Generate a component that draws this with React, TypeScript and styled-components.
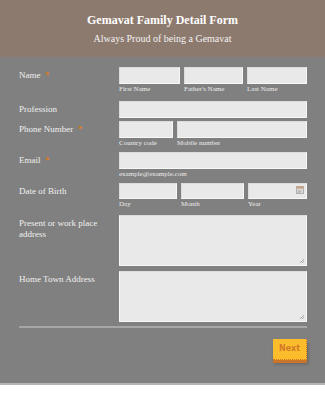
import React from 'react';
import styled, { createGlobalStyle } from 'styled-components';

const GlobalStyle = createGlobalStyle`
  html, body {
    margin: 0;
    padding: 0;
    background: #ffffff;
  }
  * {
    box-sizing: border-box;
  }
`;

const Page = styled.div`
  width: 325px;
  background: #808080;
  border-bottom: 2px solid #b4b4b4;
  font-family: 'Liberation Serif', 'Times New Roman', serif;
`;

const Header = styled.header`
  height: 57px;
  background: #8d7a6e;
  display: flex;
  flex-direction: column;
  align-items: center;
  padding-top: 13px;
`;

const Title = styled.h1`
  margin: 0;
  font-size: 12px;
  font-weight: 700;
  color: #ffffff;
  line-height: 15px;
`;

const Subtitle = styled.div`
  margin-top: 4px;
  font-size: 10px;
  color: #f2f2f2;
  line-height: 13px;
`;

const Form = styled.form`
  padding: 10px 18px 23px 19px;
  display: flex;
  flex-direction: column;
`;

const Row = styled.div<{ $after?: number }>`
  display: grid;
  grid-template-columns: 100px 1fr;
  margin-bottom: ${(p) => p.$after ?? 3}px;
`;

const Label = styled.label`
  font-size: 9px;
  line-height: 11px;
  color: #f0f0f0;
  padding-top: 3px;
  padding-right: 8px;
`;

const Req = styled.span`
  color: #e57a12;
  margin-left: 5px;
  font-size: 8px;
  font-weight: 700;
`;

const Fields = styled.div<{ $cols: string; $gap?: number }>`
  display: grid;
  grid-template-columns: ${(p) => p.$cols};
  column-gap: ${(p) => p.$gap ?? 4}px;
`;

const Field = styled.div`
  display: flex;
  flex-direction: column;
  position: relative;
`;

const Input = styled.div<{ $h?: number }>`
  height: ${(p) => p.$h ?? 17}px;
  background: #e9e9e9;
  border: 1px solid #f7f7f7;
  border-top-color: #dcdcdc;
  border-left-color: #dcdcdc;
`;

const Sub = styled.span`
  font-size: 7px;
  line-height: 11px;
  height: 11px;
  color: #ececec;
`;

const TextArea = styled.div<{ $h: number }>`
  height: ${(p) => p.$h}px;
  background: #e9e9e9;
  border: 1px solid #f7f7f7;
  border-top-color: #dcdcdc;
  position: relative;
`;

const Grip = styled.svg`
  position: absolute;
  right: 1px;
  bottom: 1px;
`;

const CalIcon = styled.svg`
  position: absolute;
  right: 3px;
  top: 3px;
`;

const Divider = styled.hr`
  margin: 4px 0 0 0;
  border: none;
  border-top: 2px solid #a6a6a6;
`;

const Actions = styled.div`
  display: flex;
  justify-content: flex-end;
  padding-top: 11px;
`;

const NextButton = styled.button`
  width: 34px;
  height: 21px;
  padding: 0 0 2px 0;
  background: #fcbd2d;
  color: #d27a26;
  font-family: 'DejaVu Sans', Verdana, sans-serif;
  font-size: 8px;
  font-weight: 700;
  border: none;
  border-right: 1px dotted #cc7424;
  border-bottom: 1px dotted #cc7424;
  box-shadow: 0 3px 0 #c8752a, 1px 4px 3px rgba(0, 0, 0, 0.25);
  cursor: pointer;
`;

const ResizeGrip = () => (
  <Grip width="6" height="6" viewBox="0 0 6 6">
    <path d="M5 1 L1 5 M5 3 L3 5" stroke="#9a9a9a" strokeWidth="0.8" />
  </Grip>
);

export default function App() {
  return (
    <>
      <GlobalStyle />
      <Page>
        <Header>
          <Title>Gemavat Family Detail Form</Title>
          <Subtitle>Always Proud of being a Gemavat</Subtitle>
        </Header>
        <Form>
          <Row $after={6}>
            <Label>
              Name<Req>*</Req>
            </Label>
            <Fields $cols="61px 59px 1fr">
              <Field>
                <Input />
                <Sub>First Name</Sub>
              </Field>
              <Field>
                <Input />
                <Sub>Father's Name</Sub>
              </Field>
              <Field>
                <Input />
                <Sub>Last Name</Sub>
              </Field>
            </Fields>
          </Row>
          <Row>
            <Label>Profession</Label>
            <Input />
          </Row>
          <Row>
            <Label>
              Phone Number<Req>*</Req>
            </Label>
            <Fields $cols="54px 1fr">
              <Field>
                <Input />
                <Sub>Country code</Sub>
              </Field>
              <Field>
                <Input />
                <Sub>Mobile number</Sub>
              </Field>
            </Fields>
          </Row>
          <Row>
            <Label>
              Email<Req>*</Req>
            </Label>
            <Field>
              <Input />
              <Sub>example@example.com</Sub>
            </Field>
          </Row>
          <Row $after={5}>
            <Label>Date of Birth</Label>
            <Fields $cols="58px 63px 1fr">
              <Field>
                <Input $h={16} />
                <Sub>Day</Sub>
              </Field>
              <Field>
                <Input $h={16} />
                <Sub>Month</Sub>
              </Field>
              <Field>
                <Input $h={16} />
                <CalIcon width="8" height="8" viewBox="0 0 8 8">
                  <rect x="0.5" y="0.5" width="7" height="7" fill="#d8d8d8" stroke="#b0b0b0" />
                  <rect x="0.5" y="0.5" width="7" height="2" fill="#c9a27c" />
                  <path d="M2 5 L5 5 M2 6.2 L4 6.2" stroke="#9a9a9a" strokeWidth="0.8" />
                </CalIcon>
                <Sub>Year</Sub>
              </Field>
            </Fields>
          </Row>
          <Row $after={5}>
            <Label>Present or work place address</Label>
            <TextArea $h={51}>
              <ResizeGrip />
            </TextArea>
          </Row>
          <Row $after={0}>
            <Label>Home Town Address</Label>
            <TextArea $h={51}>
              <ResizeGrip />
            </TextArea>
          </Row>
          <Divider />
          <Actions>
            <NextButton type="button">Next</NextButton>
          </Actions>
        </Form>
      </Page>
    </>
  );
}
